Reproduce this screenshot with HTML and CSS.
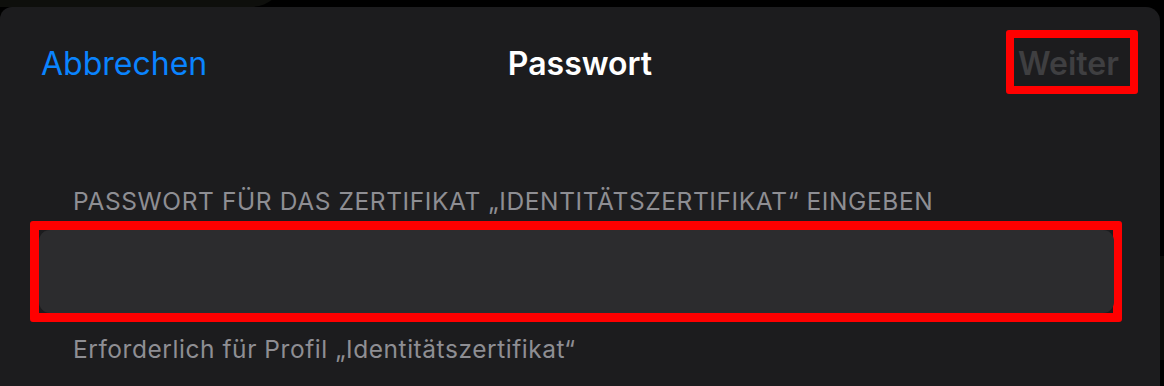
FILE: index.html
```html
<!DOCTYPE html>
<html lang="de">
<head>
<meta charset="utf-8">
<title>Passwort</title>
<link rel="stylesheet" href="styles.css">
</head>
<body>
<div class="backdrop"></div>
<div class="side-shade"></div>
<div class="sheet">
  <header class="nav">
    <button class="nav-btn cancel">Abbrechen</button>
    <h1 class="title">Passwort</h1>
    <div class="nav-right">
      <span class="mark mark-next"><button class="nav-btn next" disabled>Weiter</button></span>
    </div>
  </header>
  <section class="group">
    <div class="group-label">PASSWORT FÜR DAS ZERTIFIKAT „IDENTITÄTSZERTIFIKAT“ EINGEBEN</div>
    <div class="mark mark-field"><input class="field" type="password" aria-label="Passwort"></div>
    <div class="group-footer">Erforderlich für Profil „Identitätszertifikat“</div>
  </section>
</div>
</body>
</html>
```
FILE: styles.css
```css
html, body {
  margin: 0;
  padding: 0;
}
body {
  width: 1164px;
  height: 386px;
  background: #000;
  overflow: hidden;
  position: relative;
  font-family: Inter, "Noto Sans", "Liberation Sans", sans-serif;
}
.backdrop {
  position: absolute;
  left: 0;
  top: -30px;
  width: 285px;
  height: 37px;
  background: #0e0f0c;
  border-bottom-right-radius: 34px;
}
.side-shade {
  position: absolute;
  right: 0;
  top: 256px;
  width: 4px;
  height: 104px;
  background: #0b0c09;
}
.sheet {
  position: relative;
  margin-top: 7px;
  width: 1160px;
  height: 379px;
  background: #1c1c1e;
  border-radius: 12px 14px 0 0;
}
.nav {
  height: 113px;
  display: grid;
  grid-template-columns: 1fr auto 1fr;
  align-items: center;
  padding: 0 22px;
}
.nav-btn {
  background: none;
  border: 0;
  padding: 0;
  margin: 0;
  font-family: inherit;
  font-size: 32px;
  line-height: 40px;
}
.cancel {
  justify-self: start;
  margin-left: 19px;
  color: #0a84ff;
  font-weight: 400;
}
.title {
  margin: 0;
  color: #fff;
  font-size: 32px;
  line-height: 40px;
  font-weight: 600;
}
.nav-right {
  justify-self: end;
  margin-bottom: 3px;
}
.mark {
  border: 8px solid #ff0000;
  border-radius: 3px;
  display: block;
}
.mark-next {
  display: inline-flex;
  align-items: center;
  justify-content: flex-start;
  box-sizing: content-box;
  width: 116px;
  height: 48px;
  padding: 0;
}
.next {
  color: #3f3f41;
  font-weight: 600;
  margin-left: 4px;
  margin-top: 3px;
}
.group {
  padding: 0 0 0 30px;
}
.group-label {
  margin: 67px 0 0 43px;
  color: #8e8e93;
  font-size: 24.5px;
  line-height: 28px;
  letter-spacing: 0.6px;
  white-space: nowrap;
}
.mark-field {
  margin-top: 6px;
  width: 1074px;
  border-width: 9px;
  background: #1c1c1e;
}
.field {
  display: block;
  box-sizing: border-box;
  width: 1075px;
  height: 83px;
  margin: 0;
  border: 0;
  border-radius: 11px;
  background: #2c2c2e;
  outline: none;
}
.group-footer {
  margin: 13px 0 0 43px;
  color: #8e8e93;
  font-size: 24.5px;
  line-height: 28px;
  letter-spacing: 0.55px;
  white-space: nowrap;
}
```
